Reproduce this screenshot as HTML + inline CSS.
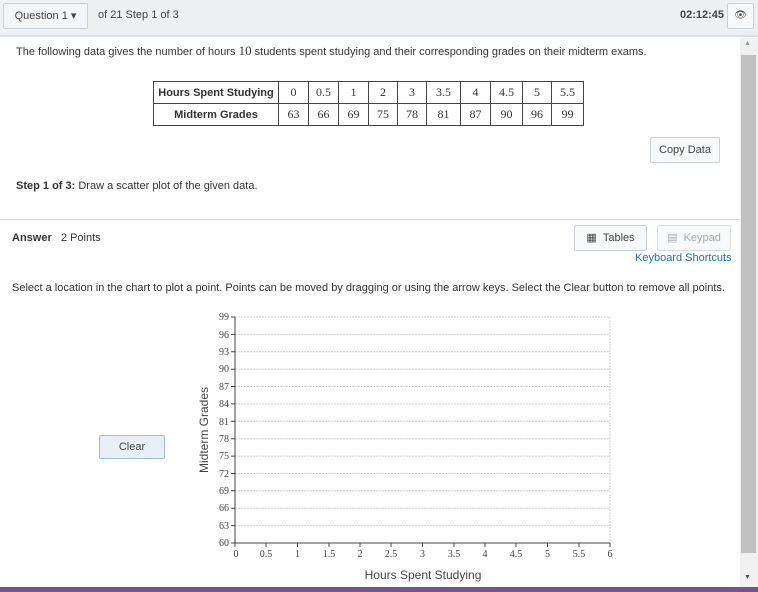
<!DOCTYPE html>
<html><head><style>
body{margin:0;width:758px;height:592px;overflow:hidden;background:#fff;font-family:"Liberation Sans",sans-serif;font-size:11px;color:#333;position:relative}
.a{position:absolute}
.btn{position:absolute;border:1px solid #c9d2d8;border-radius:2px;background:#f7f9fa;font-size:11px;color:#444;text-align:center;box-sizing:border-box}
table{border-collapse:collapse;position:absolute;left:153px;top:81px;font-family:"Liberation Serif",serif;font-size:12px}
td{border:1px solid #444;height:21px;padding:0;text-align:center}
td.h{font-family:"Liberation Sans",sans-serif;font-weight:bold;font-size:11px;width:124px}
</style></head><body>
<div class="a" style="left:0;top:0;width:758px;height:35px;background:#eef0f1;border-bottom:2px solid #dcdfe1"></div>
<div class="btn" style="left:3px;top:3px;width:85px;height:26px;line-height:24px;background:#f4f7f9">Question 1 ▾</div>
<div class="a" style="left:98px;top:9px;color:#444">of 21 Step 1 of 3</div>
<div class="a" style="left:680px;top:9px;font-weight:bold;color:#444">02:12:45</div>
<div class="btn" style="left:727px;top:3px;width:27px;height:26px;line-height:24px;font-size:10px">👁</div>
<div class="a" style="left:740px;top:38px;width:18px;height:549px;background:#f1f1f1"></div>
<div class="a" style="left:741px;top:55px;width:15px;height:498px;background:#c1c1c1"></div>
<div class="a" style="left:744px;top:40px;font-size:7px;color:#999">▲</div>
<div class="a" style="left:744px;top:574px;font-size:7px;color:#555">▼</div>
<div class="a" style="left:0;top:587px;width:758px;height:5px;background:#7b4f9e"></div>
<div class="a" style="left:16px;top:43px">The following data gives the number of hours <span style="font-family:'Liberation Serif',serif;font-size:13px">10</span> students spent studying and their corresponding grades on their midterm exams.</div>
<table><tr><td class="h">Hours Spent Studying</td><td style="width:29px">0</td><td style="width:29px">0.5</td><td style="width:29px">1</td><td style="width:28px">2</td><td style="width:28px">3</td><td style="width:33px">3.5</td><td style="width:29px">4</td><td style="width:31px">4.5</td><td style="width:28px">5</td><td style="width:31px">5.5</td></tr>
<tr><td class="h">Midterm Grades</td><td>63</td><td>66</td><td>69</td><td>75</td><td>78</td><td>81</td><td>87</td><td>90</td><td>96</td><td>99</td></tr></table>
<div class="btn" style="left:650px;top:137px;width:70px;height:26px;line-height:24px">Copy Data</div>
<div class="a" style="left:16px;top:180px"><b>Step 1 of 3:</b> Draw a scatter plot of the given data.</div>
<div class="a" style="left:0;top:219px;width:740px;height:1px;background:#ddd"></div>
<div class="a" style="left:12px;top:232px"><b>Answer</b> &nbsp; 2 Points</div>
<div class="btn" style="left:574px;top:225px;width:73px;height:26px;line-height:24px">▦ &nbsp;Tables</div>
<div class="btn" style="left:657px;top:225px;width:74px;height:26px;line-height:24px;color:#aaa;border-color:#ddd">▤ &nbsp;Keypad</div>
<div class="a" style="left:635px;top:252px;color:#1a6fb5">Keyboard Shortcuts</div>
<div class="a" style="left:12px;top:282px">Select a location in the chart to plot a point. Points can be moved by dragging or using the arrow keys. Select the Clear button to remove all points.</div>
<div class="btn" style="left:99px;top:435px;width:66px;height:24px;line-height:22px;background:#e6f0f6;border-color:#9fbfd3">Clear</div>
<svg class="a" style="left:0;top:0" width="758" height="592" font-family="Liberation Serif,serif" font-size="10" fill="#444">
<g stroke="#ccc" stroke-dasharray="2,1">
<line x1="235" y1="317" x2="610" y2="317"/><line x1="235" y1="334.4" x2="610" y2="334.4"/><line x1="235" y1="351.8" x2="610" y2="351.8"/><line x1="235" y1="369.2" x2="610" y2="369.2"/><line x1="235" y1="386.5" x2="610" y2="386.5"/><line x1="235" y1="403.9" x2="610" y2="403.9"/><line x1="235" y1="421.3" x2="610" y2="421.3"/><line x1="235" y1="438.7" x2="610" y2="438.7"/><line x1="235" y1="456.1" x2="610" y2="456.1"/><line x1="235" y1="473.5" x2="610" y2="473.5"/><line x1="235" y1="490.8" x2="610" y2="490.8"/><line x1="235" y1="508.2" x2="610" y2="508.2"/><line x1="235" y1="525.6" x2="610" y2="525.6"/><line x1="610" y1="317" x2="610" y2="543"/>
</g>
<g stroke="#444"><line x1="235" y1="317" x2="235" y2="543"/><line x1="235" y1="543" x2="610" y2="543"/>
<path d="M231 317h4M231 334.4h4M231 351.8h4M231 369.2h4M231 386.5h4M231 403.9h4M231 421.3h4M231 438.7h4M231 456.1h4M231 473.5h4M231 490.8h4M231 508.2h4M231 525.6h4M231 543h4M235 543v4M266 543v4M297.5 543v4M329 543v4M360 543v4M391 543v4M422.5 543v4M454 543v4M485 543v4M516 543v4M547.5 543v4M579 543v4M610 543v4"/></g>
<g text-anchor="end"><text x="229" y="320">99</text><text x="229" y="338">96</text><text x="229" y="355">93</text><text x="229" y="372">90</text><text x="229" y="390">87</text><text x="229" y="407">84</text><text x="229" y="425">81</text><text x="229" y="442">78</text><text x="229" y="459">75</text><text x="229" y="477">72</text><text x="229" y="494">69</text><text x="229" y="511">66</text><text x="229" y="529">63</text><text x="229" y="546">60</text></g>
<g text-anchor="middle"><text x="236" y="557">0</text><text x="266" y="557">0.5</text><text x="297.5" y="557">1</text><text x="329" y="557">1.5</text><text x="360" y="557">2</text><text x="391" y="557">2.5</text><text x="422.5" y="557">3</text><text x="454" y="557">3.5</text><text x="485" y="557">4</text><text x="516" y="557">4.5</text><text x="547.5" y="557">5</text><text x="579" y="557">5.5</text><text x="610" y="557">6</text></g>
<text x="423" y="579" text-anchor="middle" font-family="Liberation Sans,sans-serif" font-size="12">Hours Spent Studying</text>
<text transform="translate(208,430) rotate(-90)" text-anchor="middle" font-family="Liberation Sans,sans-serif" font-size="12">Midterm Grades</text>
</svg>
</body></html>
